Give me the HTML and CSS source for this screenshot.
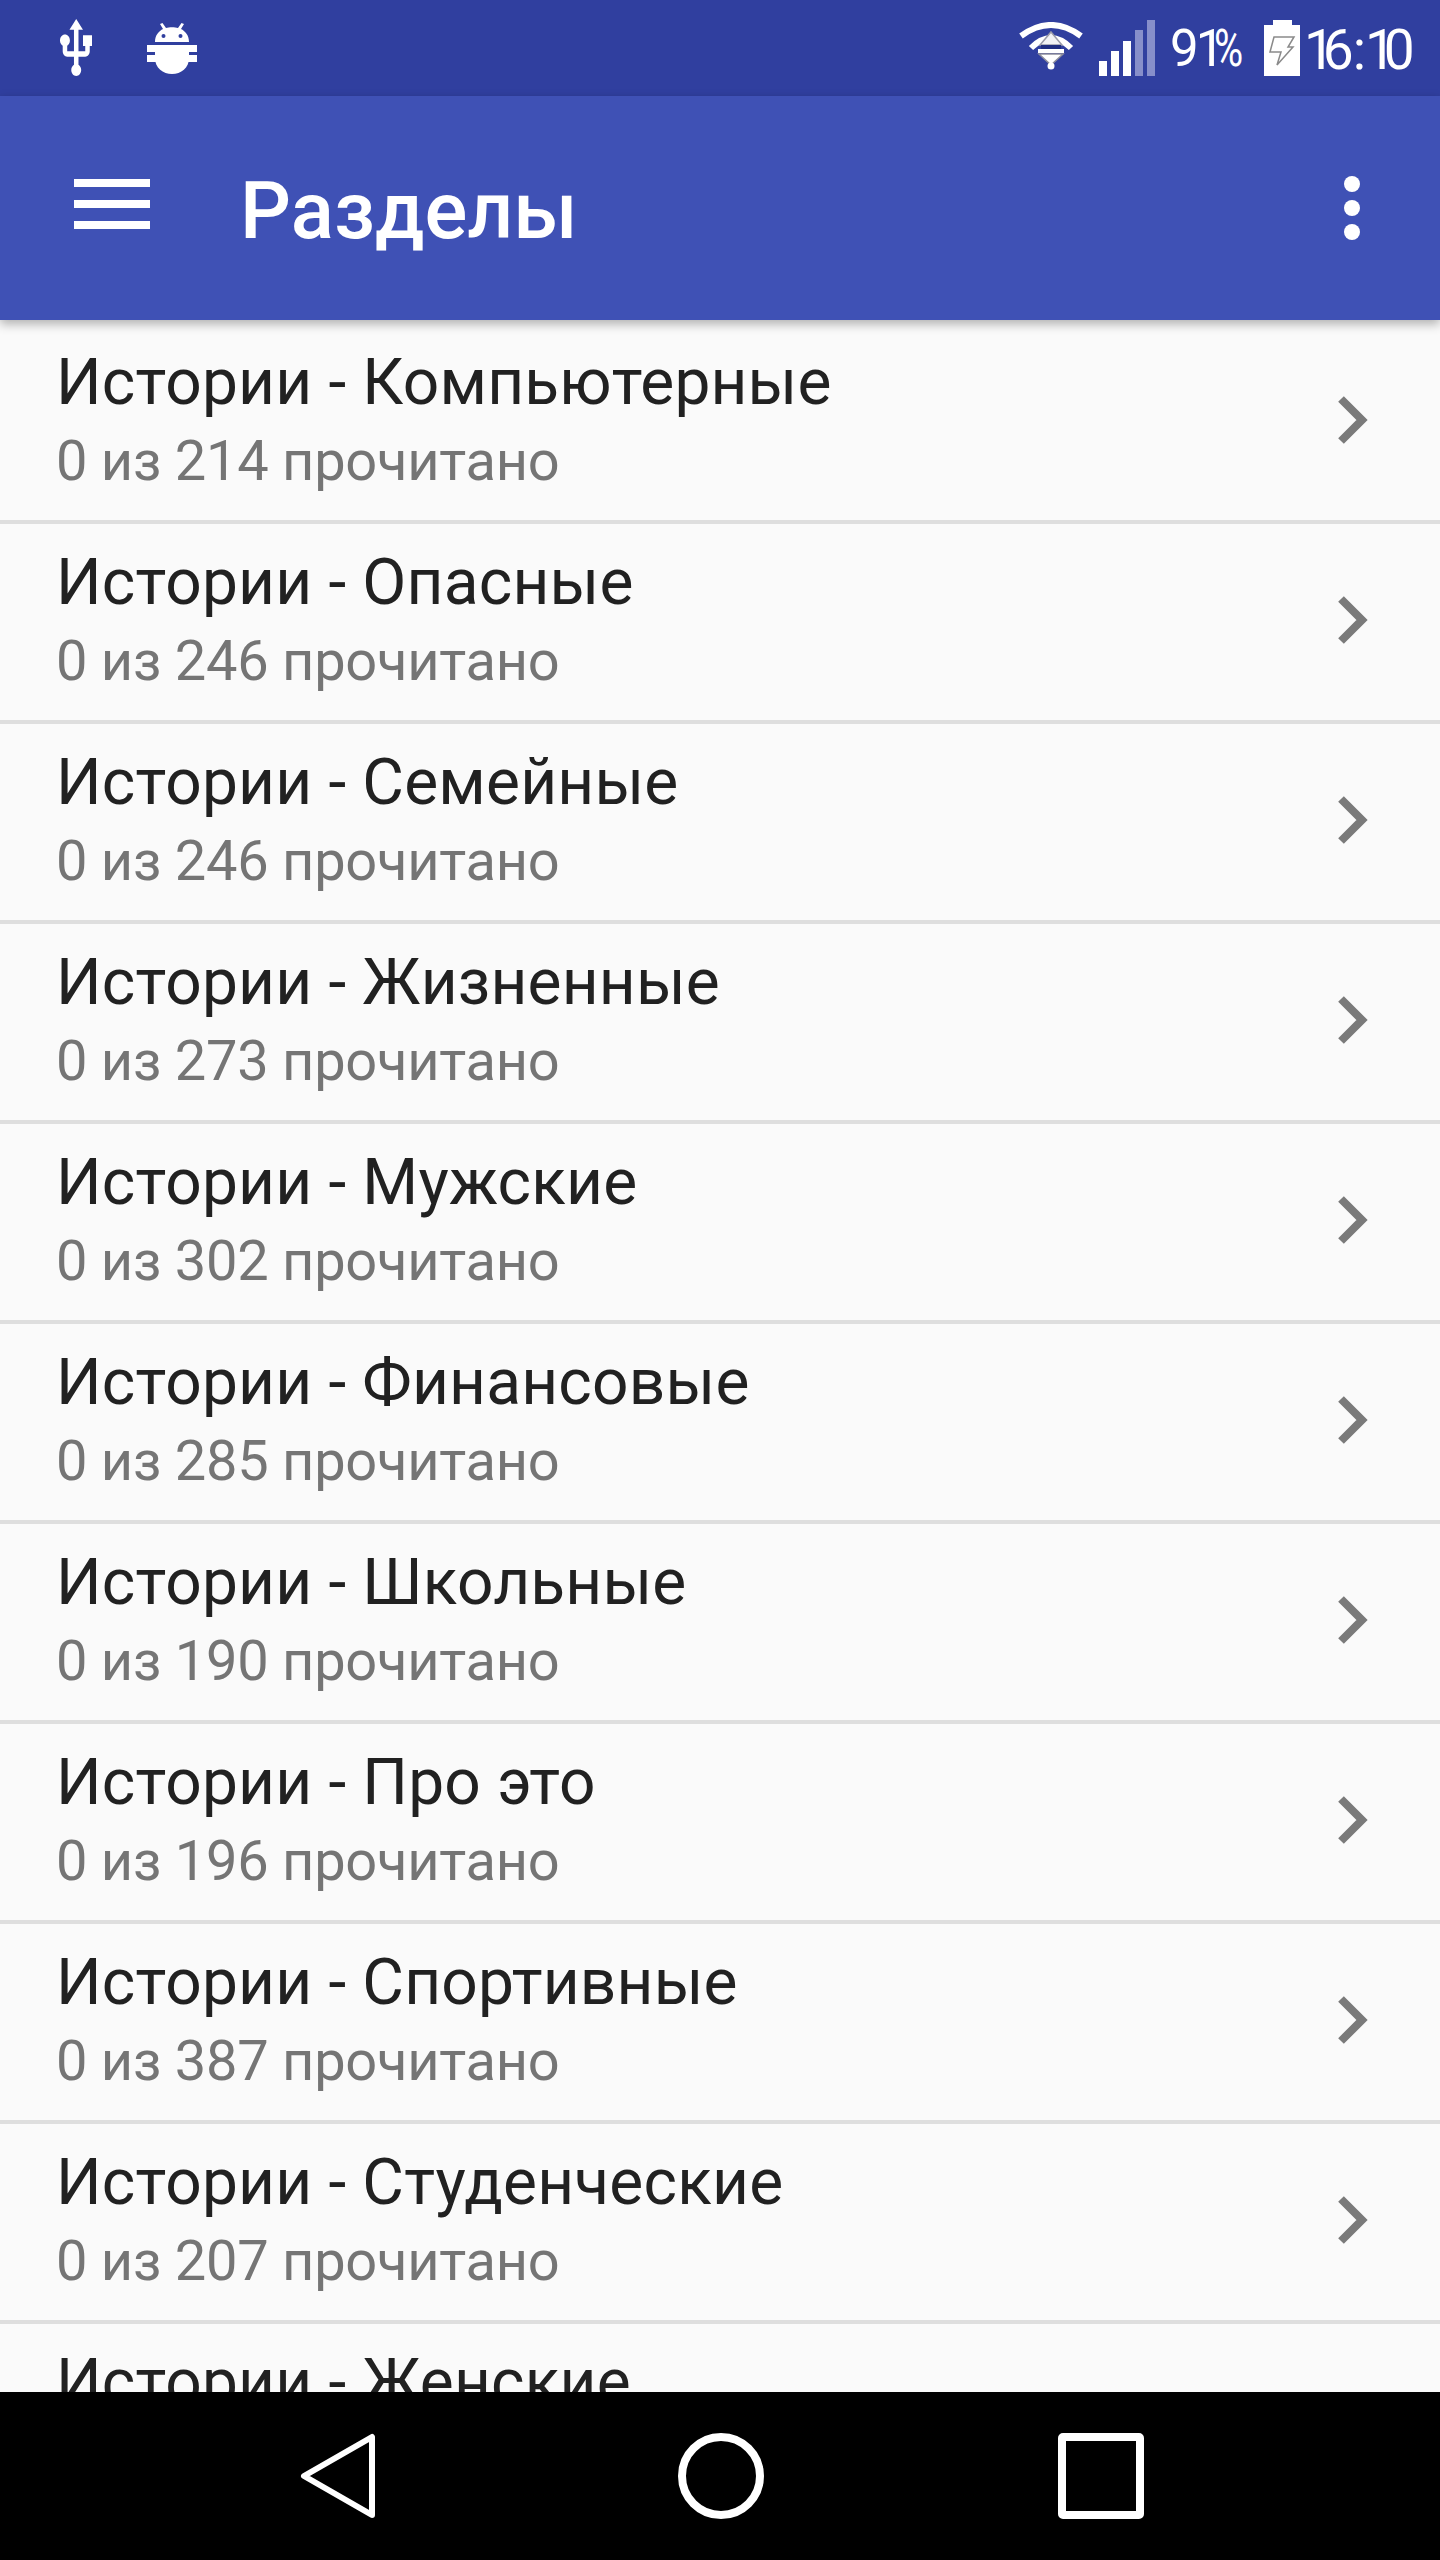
FILE: index.html
```html
<!DOCTYPE html>
<html lang="ru">
    <head>
        <meta charset="utf-8">
        <title>Разделы</title>
        <link rel="stylesheet" href="styles.css">
    </head>
    <body>
        <div class="page">
            <div class="status-bar">
                <svg class="usb-icon" viewBox="4.8 1 14.2 21.2" preserveAspectRatio="none"><path fill="#fff" d="M15 7v4h1v2h-3V5h2l-3-4-3 4h2v8H8v-2.07c.7-.37 1.2-1.08 1.2-1.93 0-1.21-.99-2.2-2.2-2.2-1.21 0-2.2.99-2.2 2.2 0 .85.5 1.56 1.2 1.93V13c0 1.11.89 2 2 2h3v3.05c-.71.37-1.2 1.1-1.2 1.95 0 1.22.99 2.2 2.2 2.2 1.21 0 2.2-.98 2.2-2.2 0-.85-.49-1.58-1.2-1.95V15h3c1.11 0 2-.89 2-2v-2h1V7h-4z"/></svg>
                <svg class="debug-icon" viewBox="0 0 50 51">
                    <path fill="#fff" d="M8 19 C8 12 12 8 16 6 L13 1 L15.500 0 L19 5 C22 4 28 4 31 5 L34.500 0 L37 1 L34 6 C38 8 42 12 42 19 Z"/>
                    <path fill="#fff" d="M0 22 H50 V29 H0 Z M0 32 H50 V39 H0 Z"/>
                    <path fill="#fff" d="M8 22 H42 V35 C42 45 34 51 25 51 C16 51 8 45 8 35 Z"/>
                    <circle fill="#303f9f" cx="16.500" cy="13" r="2"/>
                    <circle fill="#303f9f" cx="33.500" cy="13" r="2"/>
                </svg>
                <div class="status-right">
                    <svg class="wifi-icon" viewBox="0 0 67 48">
                        <path fill="none" stroke="#fff" stroke-width="6" d="M3 14 Q33 -8 63 14"/>
                        <path fill="none" stroke="#fff" stroke-width="6" d="M13 26 Q33 6 53 26"/>
                        <path fill="#f2f2f5" stroke="#9a9aa8" stroke-width="1.500" d="M33 10 L44 23 H22 Z"/>
                        <path fill="#1f2d80" d="M23 23 H43 V27 H23 Z"/>
                        <path fill="#fff" d="M20 27 H46 V31 H20 Z"/>
                        <path fill="#fff" stroke="#8e8e9c" stroke-width="1.500" d="M21 32 H45 L33 43 Z"/>
                        <circle fill="#fff" cx="33" cy="44" r="3.500"/>
                    </svg>
                    <div class="signal">
                        <span class="bar bar-1"></span>
                        <span class="bar bar-2"></span>
                        <span class="bar bar-3"></span>
                        <span class="bar bar-4 bar-off"></span>
                        <span class="bar bar-5 bar-off"></span>
                    </div>
                    <span class="battery-text">9<span class="digit-one">1</span><span class="percent">%</span></span>
                    <svg class="battery-icon" viewBox="0 0 36 56">
                        <path fill="#fff" d="M9 0 H28 V5 H36 V56 H0 V5 H9 Z"/>
                        <path fill="none" stroke="#8a8a8a" stroke-width="1.500" d="M10 17 H30 L24 27 H29 L13 45 L17 32 H6 Z"/>
                    </svg>
                    <span class="clock"><span class="digit-one">1</span>6:<span class="digit-one">1</span>0</span>
                </div>
            </div>

            <div class="app-bar">
                <div class="menu-icon">
                    <span></span>
                    <span></span>
                    <span></span>
                </div>
                <div class="app-title">Разделы</div>
                <div class="more-icon">
                    <span></span>
                    <span></span>
                    <span></span>
                </div>
            </div>

            <div class="section-list">
                <div class="section-row">
                    <div class="section-text">
                        <div class="section-name">Истории - Компьютерные</div>
                        <div class="section-count">0 из 214 прочитано</div>
                    </div>
                    <svg class="chevron" viewBox="0 0 30 48"><path fill="none" stroke="#7a7a7a" stroke-width="8" d="M3 3 L24 24 L3 45"/></svg>
                </div>
                <div class="section-row">
                    <div class="section-text">
                        <div class="section-name">Истории - Опасные</div>
                        <div class="section-count">0 из 246 прочитано</div>
                    </div>
                    <svg class="chevron" viewBox="0 0 30 48"><path fill="none" stroke="#7a7a7a" stroke-width="8" d="M3 3 L24 24 L3 45"/></svg>
                </div>
                <div class="section-row">
                    <div class="section-text">
                        <div class="section-name">Истории - Семейные</div>
                        <div class="section-count">0 из 246 прочитано</div>
                    </div>
                    <svg class="chevron" viewBox="0 0 30 48"><path fill="none" stroke="#7a7a7a" stroke-width="8" d="M3 3 L24 24 L3 45"/></svg>
                </div>
                <div class="section-row">
                    <div class="section-text">
                        <div class="section-name">Истории - Жизненные</div>
                        <div class="section-count">0 из 273 прочитано</div>
                    </div>
                    <svg class="chevron" viewBox="0 0 30 48"><path fill="none" stroke="#7a7a7a" stroke-width="8" d="M3 3 L24 24 L3 45"/></svg>
                </div>
                <div class="section-row">
                    <div class="section-text">
                        <div class="section-name">Истории - Мужские</div>
                        <div class="section-count">0 из 302 прочитано</div>
                    </div>
                    <svg class="chevron" viewBox="0 0 30 48"><path fill="none" stroke="#7a7a7a" stroke-width="8" d="M3 3 L24 24 L3 45"/></svg>
                </div>
                <div class="section-row">
                    <div class="section-text">
                        <div class="section-name">Истории - Финансовые</div>
                        <div class="section-count">0 из 285 прочитано</div>
                    </div>
                    <svg class="chevron" viewBox="0 0 30 48"><path fill="none" stroke="#7a7a7a" stroke-width="8" d="M3 3 L24 24 L3 45"/></svg>
                </div>
                <div class="section-row">
                    <div class="section-text">
                        <div class="section-name">Истории - Школьные</div>
                        <div class="section-count">0 из 190 прочитано</div>
                    </div>
                    <svg class="chevron" viewBox="0 0 30 48"><path fill="none" stroke="#7a7a7a" stroke-width="8" d="M3 3 L24 24 L3 45"/></svg>
                </div>
                <div class="section-row">
                    <div class="section-text">
                        <div class="section-name">Истории - Про это</div>
                        <div class="section-count">0 из 196 прочитано</div>
                    </div>
                    <svg class="chevron" viewBox="0 0 30 48"><path fill="none" stroke="#7a7a7a" stroke-width="8" d="M3 3 L24 24 L3 45"/></svg>
                </div>
                <div class="section-row">
                    <div class="section-text">
                        <div class="section-name">Истории - Спортивные</div>
                        <div class="section-count">0 из 387 прочитано</div>
                    </div>
                    <svg class="chevron" viewBox="0 0 30 48"><path fill="none" stroke="#7a7a7a" stroke-width="8" d="M3 3 L24 24 L3 45"/></svg>
                </div>
                <div class="section-row">
                    <div class="section-text">
                        <div class="section-name">Истории - Студенческие</div>
                        <div class="section-count">0 из 207 прочитано</div>
                    </div>
                    <svg class="chevron" viewBox="0 0 30 48"><path fill="none" stroke="#7a7a7a" stroke-width="8" d="M3 3 L24 24 L3 45"/></svg>
                </div>
                <div class="section-row">
                    <div class="section-text section-text-cut">
                        <div class="section-name">Истории - Женские</div>
                    </div>
                </div>
            </div>

            <div class="nav-bar">
                <svg class="nav-icon" viewBox="0 0 86 86"><path fill="none" stroke="#fff" stroke-width="6" stroke-linejoin="round" d="M74 4 V82 L6 43 Z"/></svg>
                <svg class="nav-icon" viewBox="0 0 86 86"><circle fill="none" stroke="#fff" stroke-width="8" cx="43" cy="43" r="39"/></svg>
                <svg class="nav-icon" viewBox="0 0 86 86"><rect fill="none" stroke="#fff" stroke-width="8" x="4" y="4" width="78" height="78" rx="1"/></svg>
            </div>
        </div>
    </body>
</html>
```

FILE: styles.css
```css
html, body {
    margin: 0;
    padding: 0;
}
body {
    font-family: Roboto, "Liberation Sans", sans-serif;
    background-color: #fafafa;
}
.page {
    display: flex;
    flex-direction: column;
    width: 1440px;
    height: 2560px;
    overflow: hidden;
}

/* status bar */
.status-bar {
    display: flex;
    align-items: flex-start;
    flex: 0 0 96px;
    height: 96px;
    background-color: #303f9f;
    color: #fff;
}
.usb-icon {
    width: 32px;
    height: 57px;
    margin: 19px 0 0 60px;
}
.debug-icon {
    width: 50px;
    height: 51px;
    margin: 23px 0 0 55px;
}
.status-right {
    display: flex;
    align-items: flex-start;
    margin-left: auto;
    margin-right: 28px;
}
.wifi-icon {
    width: 67px;
    height: 48px;
    margin-top: 22px;
}
.signal {
    display: flex;
    align-items: flex-end;
    gap: 4px;
    height: 56px;
    margin: 20px 0 0 14px;
}
.bar {
    display: block;
    width: 8px;
    background-color: #fff;
}
.bar-1 { height: 15px; }
.bar-2 { height: 25px; }
.bar-3 { height: 35px; }
.bar-4 { height: 46px; }
.bar-5 { height: 56px; }
.bar-off {
    background-color: #878fca;
}
.battery-text {
    width: 75px;
    margin: 21px 0 0 15px;
    font-size: 51px;
    line-height: 56px;
    letter-spacing: -3px;
    white-space: nowrap;
}
.battery-text .digit-one {
    letter-spacing: -0.27em;
}
.percent {
    display: inline-block;
    margin-left: 3px;
    transform: scaleX(0.78);
    transform-origin: left center;
}
.battery-icon {
    width: 36px;
    height: 56px;
    margin: 20px 0 0 19px;
}
.clock {
    width: 108px;
    margin: 20px 0 0 4px;
    font-size: 55px;
    line-height: 60px;
    letter-spacing: -1px;
    white-space: nowrap;
}
/* the tabular 1 is too wide here, the phone font has a narrow one */
.clock .digit-one {
    letter-spacing: -0.22em;
}

/* toolbar */
.app-bar {
    position: relative;
    z-index: 1;
    display: flex;
    align-items: center;
    flex: 0 0 224px;
    background-color: #3f51b5;
    box-shadow: 0 4px 10px rgba(0, 0, 0, 0.3);
    color: #fff;
}
.menu-icon {
    display: flex;
    flex-direction: column;
    gap: 13px;
    width: 76px;
    margin: 0 0 8px 74px;
}
.menu-icon span {
    display: block;
    height: 8px;
    background-color: #fff;
}
.app-title {
    margin: 6px 0 0 90px;
    font-size: 80px;
    font-weight: 500;
    letter-spacing: 0.1px;
}
.more-icon {
    display: flex;
    flex-direction: column;
    gap: 8px;
    margin: 0 80px 0 auto;
}
.more-icon span {
    display: block;
    width: 16px;
    height: 16px;
    border-radius: 50%;
    background-color: #fff;
}

/* list */
.section-list {
    flex: 1;
    overflow: hidden;
    padding-top: 4px;
}
.section-row {
    display: flex;
    align-items: center;
    justify-content: space-between;
    box-sizing: border-box;
    height: 200px;
    padding: 0 72px 0 56px;
    border-bottom: 4px solid #dedede;
}
.section-text {
    margin-bottom: 3px;
}
.section-text-cut {
    min-height: 156px;
}
.section-name {
    color: #212121;
    font-size: 64px;
    line-height: 80px;
    letter-spacing: 0.2px;
}
.section-count {
    color: #757575;
    font-size: 56px;
    line-height: 76px;
    letter-spacing: -0.25px;
}
.chevron {
    width: 30px;
    height: 48px;
    margin-bottom: 4px;
}

/* nav buttons */
.nav-bar {
    position: relative;
    display: flex;
    flex: 0 0 168px;
    align-items: center;
    gap: 294px;
    padding-left: 298px;
    background-color: #000;
}
.nav-icon {
    width: 86px;
    height: 86px;
}
```
